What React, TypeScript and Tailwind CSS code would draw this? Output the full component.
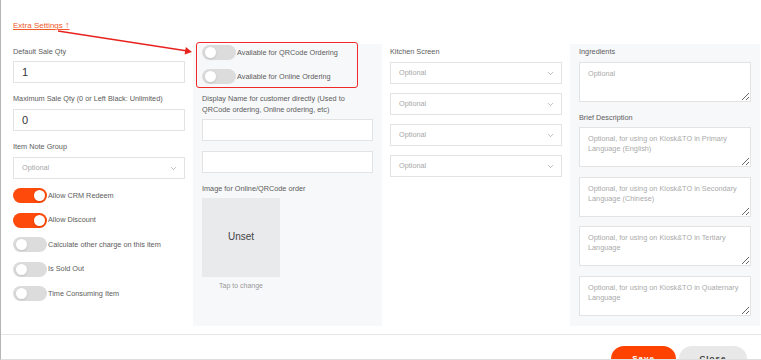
import { ChevronDown } from "lucide-react";

const Toggle = ({ on }: { on?: boolean }) => (
  <span
    className={`relative inline-block w-[34px] h-[15px] rounded-full shrink-0 ${
      on ? "bg-[#fe4a0b]" : "bg-[#dcdcdc]"
    }`}
  >
    <span
      className={`absolute top-[2px] w-[11px] h-[11px] rounded-full bg-white shadow-sm ${
        on ? "left-[21px]" : "left-[3px]"
      }`}
    />
  </span>
);

const ToggleRow = ({ label, on }: { label: string; on?: boolean }) => (
  <div className="flex items-center gap-[1px] h-[15px] text-[7.3px] leading-[10px]">
    <Toggle on={on} />
    <span className="text-[#5c5c5c]">{label}</span>
  </div>
);

const Label = ({ children }: { children: React.ReactNode }) => (
  <div className="text-[7.3px] leading-[10px] text-[#5c5c5c]">{children}</div>
);

const TextInput = ({ value }: { value?: string }) => (
  <input
    defaultValue={value}
    className="block w-full h-[22px] border border-[#e3e3e3] bg-white pl-2 text-[11px] text-[#333] outline-none"
  />
);

const Select = () => (
  <div className="flex items-center justify-between w-full h-[22px] border border-[#e3e3e3] bg-white pl-2 pr-[6px] text-[7.3px] leading-[10px]">
    <span className="text-[#a8a8a8]">Optional</span>
    <ChevronDown size={9} strokeWidth={1.5} className="text-[#888]" />
  </div>
);

const TextArea = ({ placeholder }: { placeholder: string }) => (
  <textarea
    placeholder={placeholder}
    className="block w-full h-[40px] border border-[#e3e3e3] bg-white px-2 pt-[6px] text-[7.3px] leading-[10px] text-[#333] placeholder-[#aaa] outline-none resize-y"
  />
);

export default function App() {
  return (
    <div className="relative w-[761px] h-[360px] overflow-hidden bg-white border-l border-b border-l-[#b5b5b5] border-b-[#dedede] font-['Liberation_Sans',Arial,sans-serif] text-[7.3px] leading-[10px]">
      {/* annotation arrow */}
      <svg
        className="absolute left-0 top-0 pointer-events-none z-10"
        width="200"
        height="60"
      >
        <line x1="57" y1="31" x2="185" y2="50.7" stroke="#e8231e" strokeWidth="1.6" />
        <polygon points="191,52 183.6,54.4 184.8,47" fill="#e8231e" />
      </svg>

      <div className="pt-[20px] pl-3 h-[30px] text-[8px] leading-[10px]">
        <a className="text-[#f0592a] underline">
          Extra Settings <span className="text-[9px]">↑</span>
        </a>
      </div>

      <div className="flex gap-2 pl-3 mt-[14px] h-[282px]">
        {/* column 1 */}
        <div className="w-[172px] pt-[3px] flex flex-col">
          <Label>Default Sale Qty</Label>
          <div className="mt-[4px]">
            <TextInput value="1" />
          </div>
          <div className="mt-[11px]">
            <Label>Maximum Sale Qty (0 or Left Black: Unlimited)</Label>
          </div>
          <div className="mt-[5px]">
            <TextInput value="0" />
          </div>
          <div className="mt-[11px]">
            <Label>Item Note Group</Label>
          </div>
          <div className="mt-[5px]">
            <Select />
          </div>
          <div className="mt-[9px] flex flex-col gap-[9.5px]">
            <ToggleRow label="Allow CRM Redeem" on />
            <ToggleRow label="Allow Discount" on />
            <ToggleRow label="Calculate other charge on this item" />
            <ToggleRow label="Is Sold Out" />
            <ToggleRow label="Time Consuming Item" />
          </div>
        </div>

        {/* column 2 */}
        <div className="relative w-[189px] bg-[#f7f8fa] px-[9px] pt-[1px] flex flex-col">
          <div className="absolute left-[3px] top-[-2px] w-[162px] h-[46px] border-[1.5px] border-[#f02a2a] rounded-[3px]" />
          <div className="flex flex-col gap-[9px]">
            <ToggleRow label="Available for QRCode Ordering" />
            <ToggleRow label="Available for Online Ordering" />
          </div>
          <div className="mt-[10px] text-[7.3px] leading-[10.5px] text-[#5c5c5c]">
            Display Name for customer directly (Used to QRCode ordering, Online ordering, etc)
          </div>
          <div className="mt-[3.5px]">
            <TextInput />
          </div>
          <div className="mt-[10px]">
            <TextInput />
          </div>
          <div className="mt-[11px]">
            <Label>Image for Online/QRCode order</Label>
          </div>
          <div className="mt-[4px] w-[78px]">
            <div className="w-[78px] h-[79px] bg-[#e9eaec] flex items-center justify-center text-[10px] text-[#444]">
              Unset
            </div>
            <div className="mt-[4px] text-center text-[7px] leading-[10px] text-[#999]">
              Tap to change
            </div>
          </div>
        </div>

        {/* column 3 */}
        <div className="w-[172px] pt-[3px] flex flex-col">
          <Label>Kitchen Screen</Label>
          <div className="mt-[5px] flex flex-col gap-[9px]">
            <Select />
            <Select />
            <Select />
            <Select />
          </div>
        </div>

        {/* column 4 */}
        <div className="w-[190px] bg-[#f7f8fa] px-[9px] pt-[3px] flex flex-col">
          <Label>Ingredients</Label>
          <div className="mt-[5px]">
            <TextArea placeholder="Optional" />
          </div>
          <div className="mt-[11px]">
            <Label>Brief Description</Label>
          </div>
          <div className="mt-[4px] flex flex-col gap-[9.7px]">
            <TextArea placeholder="Optional, for using on Kiosk&TO in Primary Language (English)" />
            <TextArea placeholder="Optional, for using on Kiosk&TO in Secondary Language (Chinese)" />
            <TextArea placeholder="Optional, for using on Kiosk&TO in Tertiary Language" />
            <TextArea placeholder="Optional, for using on Kiosk&TO in Quaternary Language" />
          </div>
        </div>
      </div>

      {/* footer */}
      <div className="mt-[8px] border-t border-[#e6e6e6] pt-[11px] flex justify-end gap-[3px] pr-[14px]">
        <button className="w-[65px] h-[26px] rounded-full bg-[#ff4200] text-white text-[8px] leading-[10px] font-bold tracking-[1px]">
          Save
        </button>
        <button className="w-[68px] h-[26px] rounded-full bg-[#e8e8e8] text-[#333] text-[8px] leading-[10px] font-bold tracking-[1px]">
          Close
        </button>
      </div>
    </div>
  );
}
